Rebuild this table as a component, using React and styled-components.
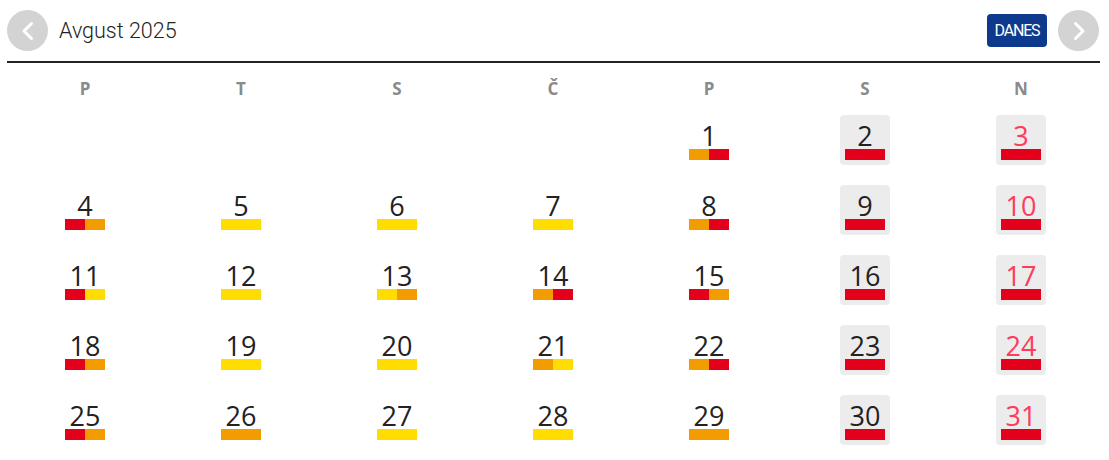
import React from "react";
import styled, { createGlobalStyle } from "styled-components";

const Global = createGlobalStyle`
  html, body { margin: 0; padding: 0; background: #fff; }
  body { font-family: "Open Sans", sans-serif; }
`;

const Wrap = styled.div`
  width: 1093px;
  margin-left: 7px;
`;

const Header = styled.div`
  display: flex;
  align-items: center;
  height: 41px;
  padding: 10px 1px 10px 0;
  border-bottom: 2px solid #222;
`;

const CircleBtn = styled.button`
  width: 41px;
  height: 41px;
  border-radius: 50%;
  border: none;
  background: #d3d3d3;
  display: flex;
  align-items: center;
  justify-content: center;
  padding: 0;
  cursor: pointer;
  flex: none;
`;

const Title = styled.div`
  font-family: Roboto, sans-serif;
  font-weight: 300;
  font-size: 21.5px;
  color: #222;
  margin-left: 11px;
  flex: 1;
`;

const Today = styled.button`
  height: 33px;
  width: 60px;
  border: none;
  border-radius: 4px;
  background: #0d3a8c;
  color: #fff;
  font-family: Roboto, sans-serif;
  font-size: 16px;
  letter-spacing: -1.2px;
  padding: 0;
  margin-right: 11px;
`;

const Grid = styled.div`
  width: 1092px;
  display: grid;
  grid-template-columns: repeat(7, 1fr);
  row-gap: 20px;
  justify-items: center;
  margin-top: ${(p) => p.$mt}px;
`;

const DayName = styled.div`
  font-size: 17px;
  font-weight: 700;
  color: #8a8a8a;
  line-height: 23px;
`;

const Cell = styled.div`
  width: 50px;
  height: 50px;
  box-sizing: border-box;
  padding: 5px;
  border-radius: 4px;
  background: ${(p) => (p.$weekend ? "#ececec" : "transparent")};
  display: flex;
  flex-direction: column;
  justify-content: flex-end;
  align-items: center;
  grid-column: ${(p) => p.$col || "auto"};
`;

const Num = styled.div`
  font-size: 27px;
  line-height: 26px;
  color: ${(p) => (p.$sunday ? "#ff3b5c" : "#222")};
`;

const Bar = styled.div`
  display: flex;
  width: 40px;
  height: 11px;
`;

const Seg = styled.div`
  flex: 1;
  background: ${(p) => p.$c};
`;

const R = "#e2001a";
const O = "#f39c00";
const Y = "#ffdd00";

const data = {
  1: [O, R], 2: [R], 3: [R], 4: [R, O], 5: [Y], 6: [Y], 7: [Y], 8: [O, R], 9: [R], 10: [R],
  11: [R, Y], 12: [Y], 13: [Y, O], 14: [O, R], 15: [R, O], 16: [R], 17: [R],
  18: [R, O], 19: [Y], 20: [Y], 21: [O, Y], 22: [O, R], 23: [R], 24: [R],
  25: [R, O], 26: [O], 27: [Y], 28: [Y], 29: [O], 30: [R], 31: [R],
};

const names = ["P", "T", "S", "Č", "P", "S", "N"];

const Chevron = ({ dir }) => (
  <svg width="20" height="20" viewBox="0 0 20 20">
    <path
      d={dir === "left" ? "M13.5 2.5 L6 10 L13.5 17.5" : "M6.5 2.5 L14 10 L6.5 17.5"}
      fill="none"
      stroke="#fff"
      strokeWidth="3"
      strokeLinecap="round"
      strokeLinejoin="round"
    />
  </svg>
);

export default function App() {
  const days = Array.from({ length: 31 }, (_, i) => i + 1);
  return (
    <>
      <Global />
      <Wrap>
        <Header>
          <CircleBtn><Chevron dir="left" /></CircleBtn>
          <Title>Avgust 2025</Title>
          <Today>DANES</Today>
          <CircleBtn><Chevron dir="right" /></CircleBtn>
        </Header>
        <Grid $mt={14}>
          {names.map((n, i) => (
            <DayName key={i}>{n}</DayName>
          ))}
        </Grid>
        <Grid $mt={15}>
          {days.map((d) => {
            const dow = (d + 4 - 1) % 7; // Aug 1 2025 is Friday (index 4)
            const weekend = dow >= 5;
            return (
              <Cell key={d} $weekend={weekend} $col={d === 1 ? 5 : undefined}>
                <Num $sunday={dow === 6}>{d}</Num>
                <Bar>
                  {data[d].map((c, i) => (
                    <Seg key={i} $c={c} />
                  ))}
                </Bar>
              </Cell>
            );
          })}
        </Grid>
      </Wrap>
    </>
  );
}
